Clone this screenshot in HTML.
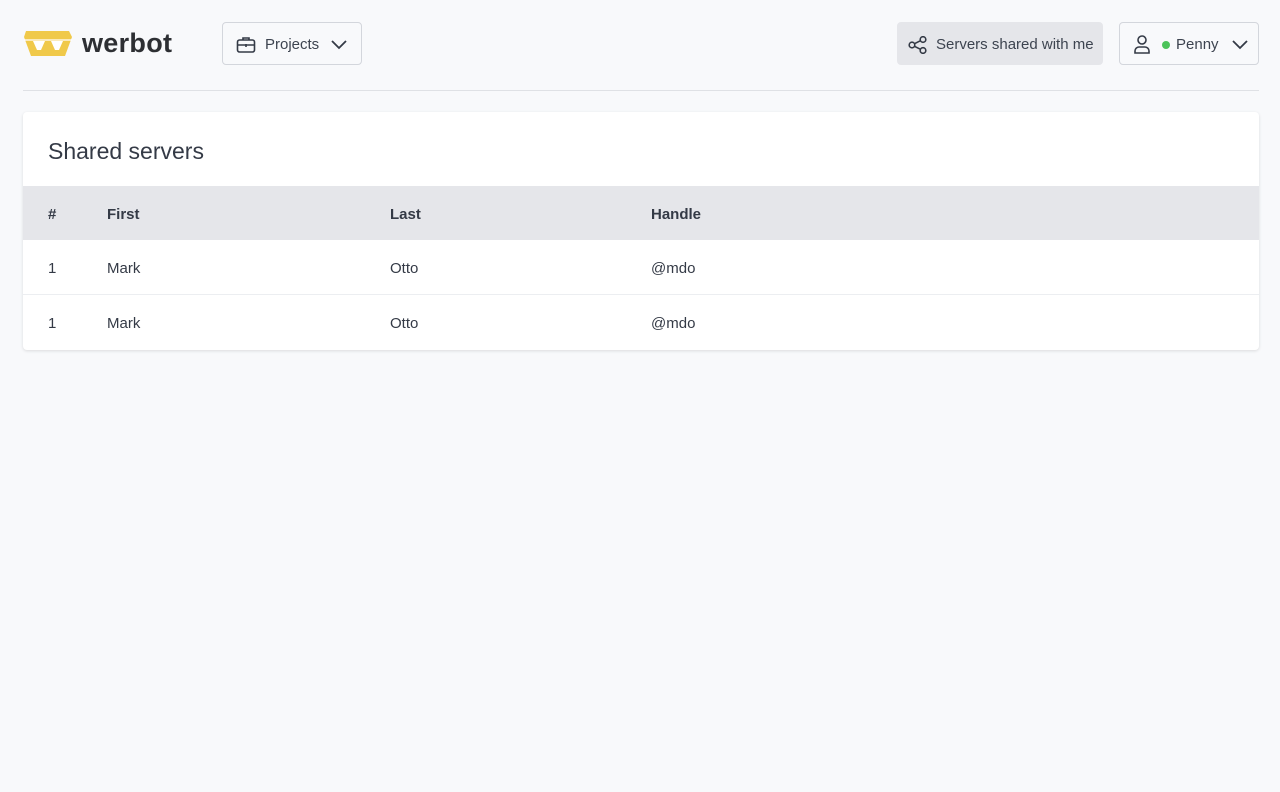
<!DOCTYPE html>
<html><head><meta charset="utf-8"><style>
*{box-sizing:border-box;margin:0;padding:0}
body{width:1280px;height:792px;background:#f8f9fb;font-family:"Liberation Sans",sans-serif;color:#343a46;position:relative;overflow:hidden}
.btn{position:absolute;top:22px;height:43px;border:1px solid #d3d6dc;border-radius:4px;background:#f8f9fb;display:flex;align-items:center;font-size:15px;color:#3d4450;padding-top:2px}
.hr{position:absolute;left:23px;right:21px;top:90px;border-top:1px solid #dfe1e5}
.card{position:absolute;left:23px;top:112px;width:1236px;height:238px;background:#fff;border-radius:4px;box-shadow:0 1px 3px rgba(0,0,0,.12)}
.card h1{font-weight:normal;font-size:23px;position:absolute;left:25px;top:26px;color:#343a46}
.row{position:absolute;left:0;right:0;height:55px;font-size:15px}
.row span{position:absolute;top:20px}
.head{top:74px;height:54px;background:#e5e6ea;font-weight:bold}
</style></head><body>
<svg style="position:absolute;left:24px;top:31px" width="48" height="26" viewBox="0 0 48 26">
<polygon points="2,0 45,0 48,6 41,25 7,25 0,6" fill="#f0c94a"/>
<polygon points="9,10 21,10 17,19 13,19" fill="#fff"/>
<polygon points="27,10 39,10 35,19 31,19" fill="#fff"/>
<line x1="0" y1="9" x2="48" y2="9" stroke="#fff" stroke-width="1.2"/>
</svg>
<div style="position:absolute;left:82px;top:28px;font-size:27px;font-weight:bold;color:#2d2f33;letter-spacing:0.3px">werbot</div>
<div class="btn" style="left:222px;width:140px">
<svg style="margin-left:13px" width="20" height="18" viewBox="0 0 20 18" fill="none" stroke="#343a46" stroke-width="1.6"><rect x="1.5" y="4" width="17" height="12" rx="2"/><path d="M7 4V2h6v2M1.5 9h17M10 8v3"/></svg>
<span style="margin-left:9px">Projects</span>
<svg style="margin-left:12px" width="16" height="10" viewBox="0 0 16 10" fill="none" stroke="#343a46" stroke-width="1.8"><path d="M1 1l7 7 7-7"/></svg>
</div>
<div class="btn" style="left:897px;width:206px;background:#e5e6ea;border-color:#e5e6ea">
<svg style="margin-left:10px" width="20" height="18" viewBox="0 0 20 18" fill="none" stroke="#343a46" stroke-width="1.6"><circle cx="4" cy="9" r="2.8"/><circle cx="15" cy="3.5" r="2.8"/><circle cx="15" cy="14.5" r="2.8"/><path d="M6.5 7.7l6-3M6.5 10.3l6 3"/></svg>
<span style="margin-left:8px">Servers shared with me</span>
</div>
<div class="btn" style="left:1119px;width:140px">
<svg style="margin-left:14px" width="16" height="19" viewBox="0 0 16 19" fill="none" stroke="#343a46" stroke-width="1.6"><circle cx="8" cy="5" r="4"/><path d="M1 18v-2a4 4 0 0 1 4-4h6a4 4 0 0 1 4 4v2z"/></svg>
<span style="margin-left:12px;width:8px;height:8px;border-radius:50%;background:#4cc35a"></span>
<span style="margin-left:6px">Penny</span>
<svg style="margin-left:13px" width="16" height="10" viewBox="0 0 16 10" fill="none" stroke="#343a46" stroke-width="1.8"><path d="M1 1l7 7 7-7"/></svg>
</div>
<div class="hr"></div>
<div class="card">
<h1>Shared servers</h1>
<div class="row head"><span style="left:25px">#</span><span style="left:84px">First</span><span style="left:367px">Last</span><span style="left:628px">Handle</span></div>
<div class="row" style="top:128px;border-bottom:1px solid #eceef1"><span style="left:25px">1</span><span style="left:84px">Mark</span><span style="left:367px">Otto</span><span style="left:628px">@mdo</span></div>
<div class="row" style="top:183px"><span style="left:25px">1</span><span style="left:84px">Mark</span><span style="left:367px">Otto</span><span style="left:628px">@mdo</span></div>
</div>
</body></html>
